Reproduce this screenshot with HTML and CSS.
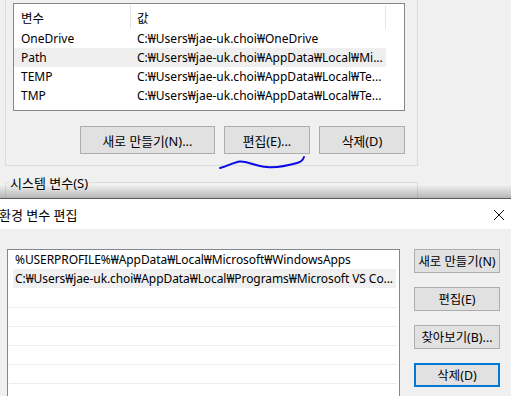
FILE: index.html
```html
<!DOCTYPE html>
<html lang="ko">
<head>
<meta charset="utf-8">
<title>환경 변수 편집</title>
<link rel="stylesheet" href="styles.css">
</head>
<body>
<div class="screen">
  <div class="behind">
    <div class="user-group">
      <div class="var-list">
        <div class="var-head">
          <div class="col-name">변수</div>
          <div class="col-value">값</div>
        </div>
        <div class="var-row"><div class="col-name">OneDrive</div><div class="col-value">C:₩Users₩jae-uk.choi₩OneDrive</div></div>
        <div class="var-row selected"><div class="col-name">Path</div><div class="col-value">C:₩Users₩jae-uk.choi₩AppData₩Local₩Mi...</div></div>
        <div class="var-row"><div class="col-name">TEMP</div><div class="col-value">C:₩Users₩jae-uk.choi₩AppData₩Local₩Te...</div></div>
        <div class="var-row"><div class="col-name">TMP</div><div class="col-value">C:₩Users₩jae-uk.choi₩AppData₩Local₩Te...</div></div>
      </div>
      <div class="btn-row">
        <button class="btn btn-new">새로 만들기(N)...</button>
        <button class="btn btn-mid">편집(E)...</button>
        <button class="btn btn-mid">삭제(D)</button>
      </div>
    </div>
    <fieldset class="sys-group">
      <legend>시스템 변수(S)</legend>
    </fieldset>
  </div>

  <div class="dialog">
    <div class="titlebar">
      <span class="title">환경 변수 편집</span>
      <svg class="close" width="12" height="12" viewBox="0 0 12 12"><path d="M1 1 L11 11 M11 1 L1 11" stroke="#111" stroke-width="1" fill="none"/></svg>
    </div>
    <div class="dialog-body">
      <div class="path-list">
        <div class="path-row"><span>%USERPROFILE%₩AppData₩Local₩Microsoft₩WindowsApps</span></div>
        <div class="path-row selected"><span>C:₩Users₩jae-uk.choi₩AppData₩Local₩Programs₩Microsoft VS Co...</span></div>
        <div class="path-row empty first-empty"></div>
        <div class="path-row empty"></div>
        <div class="path-row empty"></div>
        <div class="path-row empty"></div>
        <div class="path-row empty"></div>
        <div class="path-row empty"></div>
      </div>
      <div class="side-btns">
        <button class="btn side">새로 만들기(N)</button>
        <button class="btn side">편집(E)</button>
        <button class="btn side">찾아보기(B)...</button>
        <button class="btn side focused">삭제(D)</button>
      </div>
    </div>
  </div>

  <svg class="scribble" width="511" height="396" viewBox="0 0 511 396">
    <path d="M220 168 C228 166 234 162 240 161.5 C247 161 255 166 267 167 C278 168 290 165 297 163 C301 162 303 160 304 157" stroke="#0a0ae6" stroke-width="2" fill="none" stroke-linecap="round"/>
  </svg>
</div>
</body>
</html>
```

FILE: styles.css
```css
* { box-sizing: border-box; }
html, body { margin: 0; padding: 0; }
body {
  background: #f0f0f0;
  font-family: "Noto Sans", "Noto Sans CJK KR", sans-serif;
  font-size: 12px;
  color: #000;
}
.screen {
  width: 511px;
  height: 396px;
  overflow: hidden;
  position: relative;
}
.behind {
  height: 198px;
  position: relative;
  overflow: hidden;
}
.behind::after {
  content: "";
  position: absolute;
  left: 0; right: 0; bottom: 0;
  height: 13px;
  background: linear-gradient(to bottom, rgba(0,0,0,0), rgba(0,0,0,0.24));
}
.user-group {
  margin-left: 5px;
  width: 413px;
  border-left: 1px solid #dcdcdc;
  border-right: 1px solid #dcdcdc;
  border-bottom: 1px solid #dcdcdc;
  padding: 3px 12px 11px 7px;
}
.var-list {
  width: 392px;
  height: 108px;
  background: #fff;
  border: 1px solid #828790;
}
.var-head, .var-row {
  display: flex;
  width: 372px;
}
.var-head { height: 25px; align-items: center; }
.var-head .col-name, .var-head .col-value {
  border-right: 1px solid #e5e5e5;
  height: 24px;
  margin-top: 1px;
  display: flex;
  align-items: center;
  font-size: 12.5px;
}
.col-name { width: 117px; padding-left: 7px; }
.col-value { width: 255px; padding-left: 6px; white-space: nowrap; }
.var-row { height: 19px; align-items: center; line-height: 19px; }
.var-row.selected { background: #efefef; }

.btn-row {
  display: flex;
  gap: 9px;
  margin-top: 15px;
  margin-left: 67px;
}
.btn {
  font-family: "Noto Sans", "Noto Sans CJK KR", sans-serif;
  font-size: 12.8px;
  color: #000;
  background: #e1e1e1;
  border: 1px solid #adadad;
  padding: 0;
  margin: 0;
  white-space: nowrap;
}
.btn-new { width: 135px; height: 28px; }
.btn-mid { width: 86px; height: 28px; }

.sys-group {
  margin: 7px 0 0 5px;
  width: 413px;
  height: 40px;
  border: 1px solid #dcdcdc;
  border-bottom: none;
  padding: 0 0 0 3px;
}
.sys-group legend {
  padding: 0 1px;
  font-size: 13px;
}

.dialog {
  border-top: 1px solid #5a5a5a;
}
.titlebar {
  height: 30px;
  background: #fff;
  display: flex;
  align-items: center;
  justify-content: space-between;
  padding: 0 6px 0 0;
}
.title { margin-left: -1px; font-size: 13px; }
.close { display: block; margin-top: 1px; }

.dialog-body {
  display: flex;
  align-items: flex-start;
  gap: 14px;
  padding: 20px 0 0 7px;
  height: 200px;
}
.path-list {
  width: 393px;
  height: 200px;
  background: #fff;
  border: 1px solid #828790;
  border-bottom: none;
}
.path-row {
  height: 19px;
  line-height: 19px;
  margin: 0 3px 0 5px;
  padding-left: 2px;
  white-space: nowrap;
  letter-spacing: -0.08px;
}
.path-row.selected { background: #f0f0f0; }
.path-row.empty {
  margin: 0 2px 0 1px;
  border-bottom: 1px solid #ececec;
}
.path-row.first-empty { height: 20px; }

.side-btns {
  display: flex;
  flex-direction: column;
  width: 86px;
}
.btn.side { width: 86px; height: 24px; font-size: 12.4px; }
.btn.side + .btn.side { margin-top: 14px; }
.btn.side:nth-child(2) { margin-top: 13px; }
.btn.side.focused { border: 2px solid #0078d7; }

.scribble {
  position: absolute;
  left: 0;
  top: 0;
  pointer-events: none;
}
```
